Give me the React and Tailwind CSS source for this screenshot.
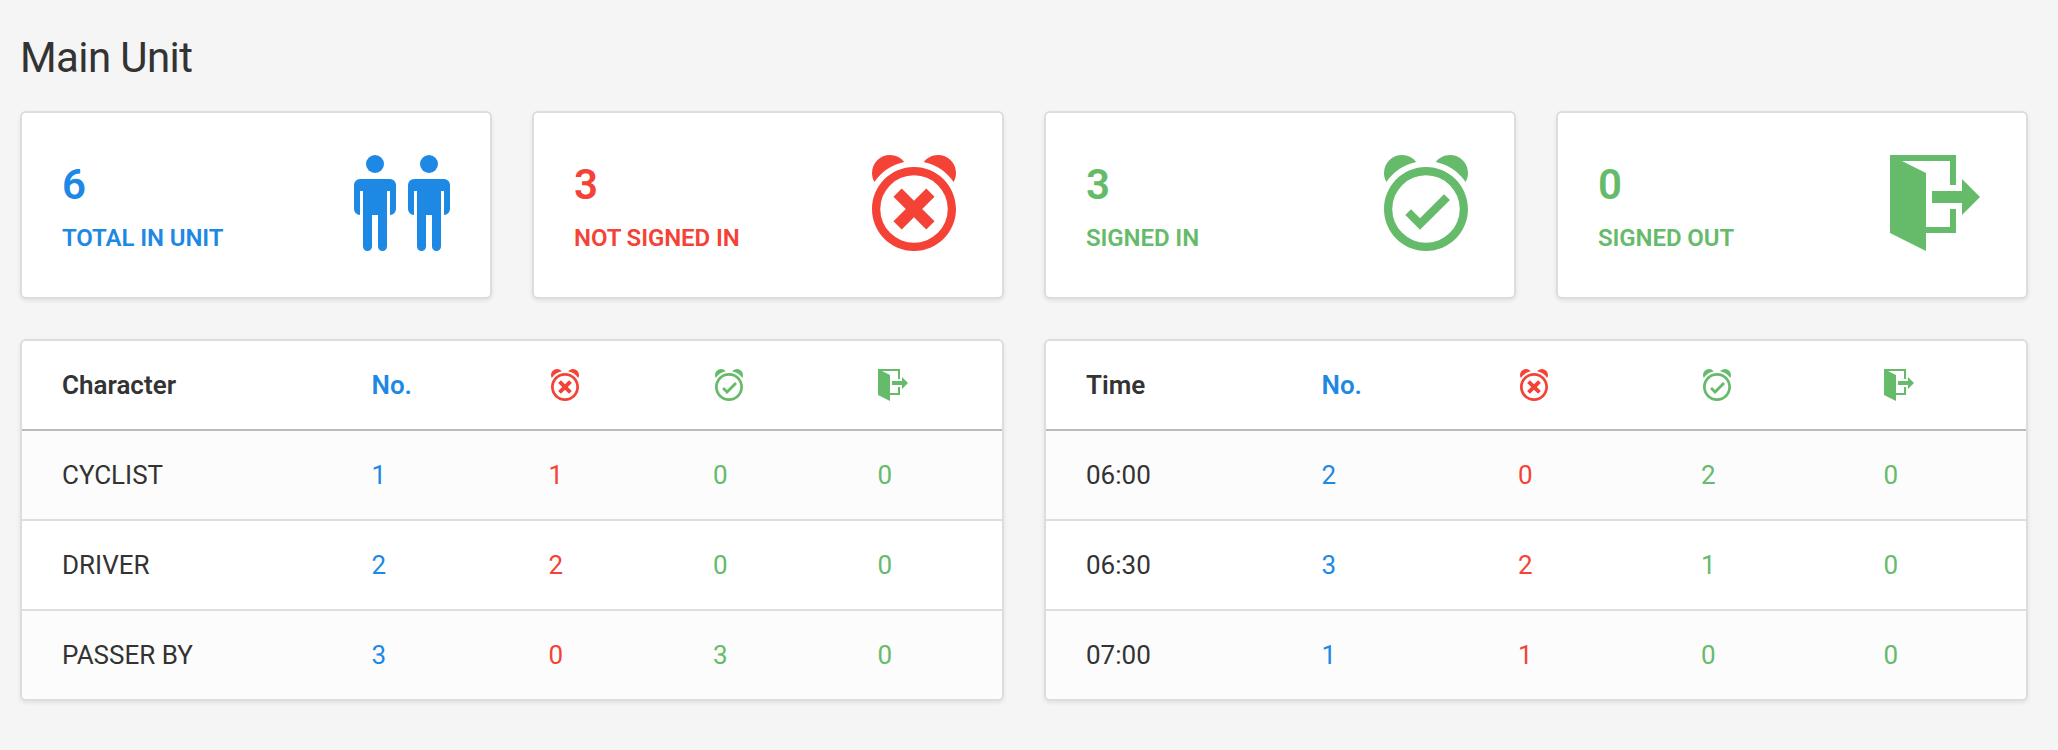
const ICONS = {
  people: (
    <>
      <circle cx="3.5" cy="1.5" r="1.5" />
      <path d="M1 4h5a1 1 0 0 1 1 1v4a1 1 0 0 1-1 1V6h-.5v9.25a.75.75 0 0 1-1.5 0V10H3v5.25a.75.75 0 0 1-1.5 0V6H1v4a1 1 0 0 1-1-1V5a1 1 0 0 1 1-1z" />
      <circle cx="12.5" cy="1.5" r="1.5" />
      <path d="M10 4h5a1 1 0 0 1 1 1v4a1 1 0 0 1-1 1V6h-.5v9.25a.75.75 0 0 1-1.5 0V10h-1v5.25a.75.75 0 0 1-1.5 0V6H10v4a1 1 0 0 1-1-1V5a1 1 0 0 1 1-1z" />
    </>
  ),
  notSignedIn: (
    <>
      <AlarmBody />
      <path d="M4.58 6.95 5.95 5.58 8 7.63l2.05-2.05 1.37 1.37L9.37 9l2.05 2.05-1.37 1.37L8 10.37l-2.05 2.05-1.37-1.37L6.63 9z" />
    </>
  ),
  signedIn: (
    <>
      <AlarmBody />
      <path d="M4.55 10 5.5 9.03l1.5 1.5 4-4 1 .97-5 4.95z" />
    </>
  ),
  signedOut: (
    <path d="M0 0h11v5h-1V1H2l4 2v9h4V9h1v4H6v3l-6-3zM7 6h5V4l3 3-3 3V8H7z" />
  ),
};

function AlarmBody() {
  return (
    <path d="M8 2C4.134 2 1 5.134 1 9s3.134 7 7 7 7-3.134 7-7-3.134-7-7-7zm0 12.625A5.625 5.625 0 1 1 8 3.375a5.625 5.625 0 0 1 0 11.25zM14.606 4.487C14.857 4.049 15 3.541 15 3a3 3 0 0 0-3-3c-.966 0-1.826.457-2.375 1.167 2.051.426 3.815 1.633 4.981 3.32zM6.375 1.167A2.995 2.995 0 0 0 4 0a3 3 0 0 0-3 3c0 .541.143 1.049.394 1.487 1.166-1.688 2.931-2.895 4.981-3.32z" />
  );
}

function Icon({ name, className }) {
  return (
    <svg viewBox="0 0 16 16" fill="currentColor" className={className}>
      {ICONS[name]}
    </svg>
  );
}

const stats = [
  { value: 6, label: 'Total in unit', icon: 'people', color: 'text-[#1e88e5]' },
  { value: 3, label: 'Not signed in', icon: 'notSignedIn', color: 'text-[#f44336]' },
  { value: 3, label: 'Signed in', icon: 'signedIn', color: 'text-[#66bb6a]' },
  { value: 0, label: 'Signed out', icon: 'signedOut', color: 'text-[#66bb6a]' },
];

const characters = [
  { name: 'CYCLIST', counts: [1, 1, 0, 0] },
  { name: 'DRIVER', counts: [2, 2, 0, 0] },
  { name: 'PASSER BY', counts: [3, 0, 3, 0] },
];

const times = [
  { name: '06:00', counts: [2, 0, 2, 0] },
  { name: '06:30', counts: [3, 2, 1, 0] },
  { name: '07:00', counts: [1, 1, 0, 0] },
];

const panel = 'bg-white border-2 border-[#ddd] rounded-md shadow-[0_2px_4px_rgba(0,0,0,0.08)]';

function StatCard({ value, label, icon, color }) {
  return (
    <div className={`${panel} ${color} h-[188px] px-10 pt-[42px] flex items-start justify-between`}>
      <div>
        <div className="text-[42px] leading-[60px] font-semibold">{value}</div>
        <div className="text-2xl leading-[47px] tracking-[-0.1px] font-semibold uppercase">{label}</div>
      </div>
      <Icon name={icon} className="w-24 h-24" />
    </div>
  );
}

function CountTable({ title, rows, columns }) {
  const colors = ['text-[#1e88e5]', 'text-[#f44336]', 'text-[#66bb6a]', 'text-[#66bb6a]'];

  return (
    <div className={`${panel} overflow-hidden text-[26px] leading-[40px]`}>
      <div className={`grid ${columns} h-[90px] pl-10 items-center border-b-2 border-[#bbb] font-semibold`}>
        <div>{title}</div>
        <div className="text-[#1e88e5]">No.</div>
        <Icon name="notSignedIn" className="w-8 h-8 text-[#f44336]" />
        <Icon name="signedIn" className="w-8 h-8 text-[#66bb6a]" />
        <Icon name="signedOut" className="w-8 h-8 text-[#66bb6a]" />
      </div>
      {rows.map((row) => (
        <div
          key={row.name}
          className={`grid ${columns} h-[90px] last:h-[88px] pl-10 items-center border-b-2 border-[#ddd] last:border-b-0 even:bg-[#fcfcfc]`}
        >
          <div>{row.name}</div>
          {row.counts.map((count, idx) => (
            <div key={idx} className={colors[idx]}>{count}</div>
          ))}
        </div>
      ))}
    </div>
  );
}

export default function App() {
  return (
    <div className="min-h-screen bg-[#f5f5f5] text-[#333] pl-5 pr-[30px] pt-7 font-['Roboto',sans-serif]">
      <h1 className="text-[42px] leading-[60px] tracking-[-0.6px] mb-[23px]">Main Unit</h1>
      <div className="grid grid-cols-4 gap-10">
        {stats.map((stat) => (
          <StatCard key={stat.label} {...stat} />
        ))}
      </div>
      <div className="mt-10 grid grid-cols-2 gap-10">
        <CountTable
          title="Character"
          rows={characters}
          columns="grid-cols-[309.5px_177px_164.5px_164.5px_1fr]"
        />
        <CountTable
          title="Time"
          rows={times}
          columns="grid-cols-[235.5px_196.5px_183px_182.5px_1fr]"
        />
      </div>
    </div>
  );
}
